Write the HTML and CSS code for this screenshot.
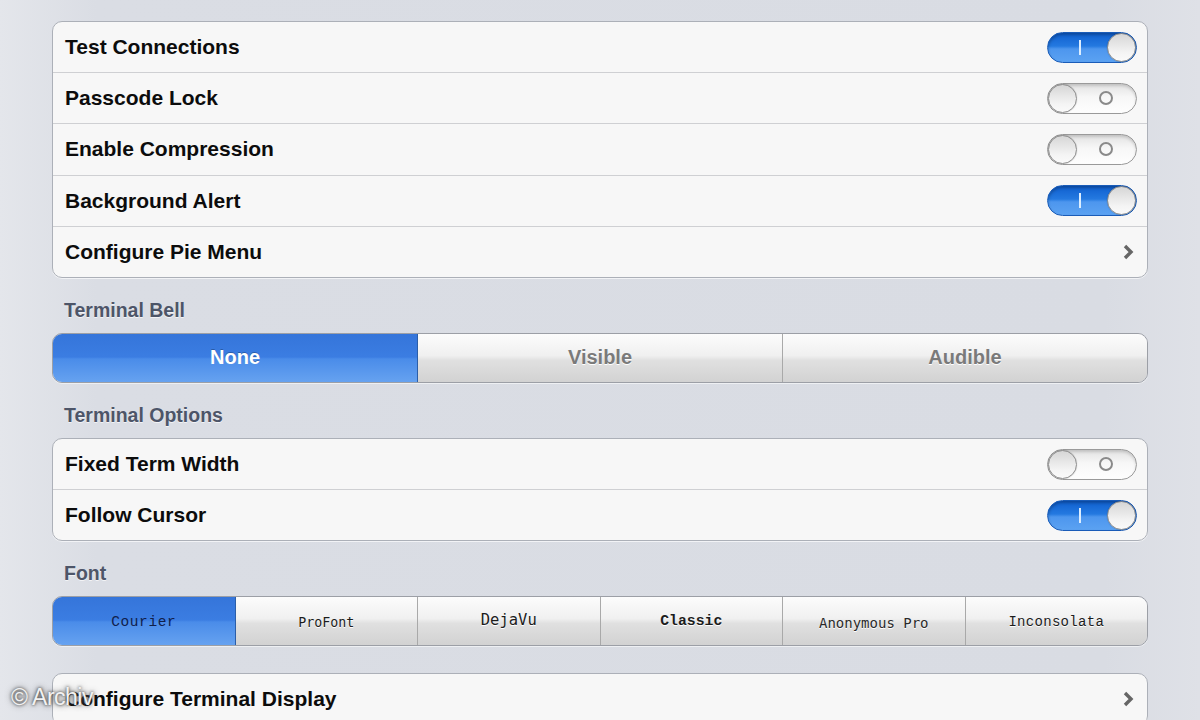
FILE: index.html
```html
<!DOCTYPE html>
<html lang="en">
<head>
  <meta charset="UTF-8" />
  <meta name="viewport" content="width=device-width, initial-scale=1.0">
  <title>Settings</title>
  <link rel="stylesheet" href="styles.css">
</head>
<body>
  <div class="page">
    <div class="group first">
      <div class="row">
        <span class="label">Test Connections</span>
        <span class="switch on"><span class="mark"></span><span class="knob"></span></span>
      </div>
      <div class="row">
        <span class="label">Passcode Lock</span>
        <span class="switch"><span class="knob"></span><span class="mark"></span></span>
      </div>
      <div class="row">
        <span class="label">Enable Compression</span>
        <span class="switch"><span class="knob"></span><span class="mark"></span></span>
      </div>
      <div class="row">
        <span class="label">Background Alert</span>
        <span class="switch on"><span class="mark"></span><span class="knob"></span></span>
      </div>
      <div class="row">
        <span class="label">Configure Pie Menu</span>
        <svg class="chevron" width="14" height="18" viewBox="0 0 14 18"><path d="M3 3 L9 9 L3 15" fill="none" stroke="#666" stroke-width="3.4"/></svg>
      </div>
    </div>

    <div class="section">Terminal Bell</div>
    <div class="segments">
      <div class="seg selected">None</div>
      <div class="seg">Visible</div>
      <div class="seg">Audible</div>
    </div>

    <div class="section">Terminal Options</div>
    <div class="group">
      <div class="row">
        <span class="label">Fixed Term Width</span>
        <span class="switch"><span class="knob"></span><span class="mark"></span></span>
      </div>
      <div class="row">
        <span class="label">Follow Cursor</span>
        <span class="switch on"><span class="mark"></span><span class="knob"></span></span>
      </div>
    </div>

    <div class="section">Font</div>
    <div class="segments fonts">
      <div class="seg selected f-courier">Courier</div>
      <div class="seg f-profont">ProFont</div>
      <div class="seg f-dejavu">DejaVu</div>
      <div class="seg f-classic">Classic</div>
      <div class="seg f-anon">Anonymous Pro</div>
      <div class="seg f-incon">Inconsolata</div>
    </div>

    <div class="group last">
      <div class="row">
        <span class="label">Configure Terminal Display</span>
        <svg class="chevron" width="14" height="18" viewBox="0 0 14 18"><path d="M3 3 L9 9 L3 15" fill="none" stroke="#666" stroke-width="3.4"/></svg>
      </div>
    </div>
  </div>

  <div class="watermark">© Archiv</div>
</body>
</html>
```

FILE: styles.css
```css
html, body {
  margin: 0;
  height: 100%;
  overflow: hidden;
}

body {
  background: linear-gradient(to right, #e4e6eb 0%, #dadde4 8%, #d9dce3 92%, #dfe1e7 100%);
  font-family: "Liberation Sans", Arial, sans-serif;
  color: #111;
}

.page {
  padding: 21px 52px 0 52px;
  width: 1096px;
}

.group {
  background: #f7f7f7;
  border: 1px solid #acb0b8;
  border-radius: 10px;
  box-shadow: 0 1px 0 #f2f3f6;
  overflow: hidden;
}

.group.last {
  margin-top: 27px;
}

.row {
  height: 50.2px;
  display: flex;
  align-items: center;
  justify-content: space-between;
  padding: 0 10px 0 12px;
  border-bottom: 1px solid #cfd0d3;
}

.row:last-child {
  border-bottom: none;
}

.label {
  font-size: 21px;
  font-weight: bold;
  color: #0c0c0c;
}

.chevron {
  margin-right: 1px;
}

.section {
  height: 55px;
  box-sizing: border-box;
  padding: 21px 0 0 12px;
  font-size: 19.5px;
  font-weight: bold;
  line-height: 22px;
  color: #4d5568;
  text-shadow: 0 1px 0 #f2f3f6;
}

/* switches */
.switch {
  width: 88px;
  height: 29px;
  border-radius: 16px;
  border: 1px solid #9a9a9a;
  display: flex;
  align-items: center;
  justify-content: space-between;
  background: linear-gradient(#e2e2e2, #f7f7f7 45%, #fefefe);
  box-shadow: inset 0 2px 3px rgba(0,0,0,0.15);
}

.switch.on {
  border-color: #1a5cb8;
  background: linear-gradient(#0f5fcf, #2479e0 45%, #4d96ee 55%, #5ba2f2);
  box-shadow: inset 0 2px 3px rgba(0,0,0,0.25);
}

.knob {
  width: 29px;
  height: 29px;
  border-radius: 50%;
  box-sizing: border-box;
  border: 1px solid #8c8c8c;
  background: linear-gradient(#d6d6d6, #f4f4f4 70%, #fafafa);
  box-shadow: 0 0 1px rgba(0,0,0,0.3);
}

.switch .mark {
  width: 14px;
  height: 14px;
  box-sizing: border-box;
  border: 2px solid #8a8a8a;
  border-radius: 50%;
  margin-right: 23px;
}

.switch.on .mark {
  width: 2px;
  height: 15px;
  border: none;
  border-radius: 0;
  background: #ddeeff;
  margin: 0 0 0 31px;
}

/* segmented controls */
.segments {
  display: flex;
  height: 50px;
  box-sizing: border-box;
  border: 1px solid #9c9fa6;
  border-radius: 10px;
  overflow: hidden;
  box-shadow: 0 1px 0 #eef0f3;
}

.seg {
  flex: 1;
  display: flex;
  align-items: center;
  justify-content: center;
  background: linear-gradient(#fcfcfc, #f0f0f0 45%, #e0e0e0 55%, #d2d2d2);
  border-left: 1px solid #a9a9a9;
  font-size: 20px;
  font-weight: bold;
  color: #7a7a7a;
  text-shadow: 0 1px 0 #ffffff;
}

.seg:first-child {
  border-left: none;
}

.seg.selected {
  background: linear-gradient(#3575da, #3b7de2 48%, #4a8ce9 52%, #66a2f0);
  color: #fff;
  text-shadow: 0 -1px 0 rgba(0,0,0,0.25);
  border-right: 1px solid #2b5ea8;
}

.seg.selected + .seg {
  border-left: none;
}

.fonts .seg {
  font-size: 13.5px;
  font-weight: normal;
  color: #1c1c1c;
  font-family: "DejaVu Sans Mono", monospace;
  letter-spacing: 0.2px;
}

.fonts .seg.selected {
  color: #10204a;
  text-shadow: none;
}

.fonts .f-courier {
  font-family: "Liberation Mono", monospace;
  font-size: 14.5px;
  letter-spacing: 0.6px;
  padding-top: 2px;
}

.fonts .f-profont {
  font-size: 13.3px;
  letter-spacing: 0;
  padding-top: 2px;
}

.fonts .f-dejavu {
  font-size: 15.5px;
  letter-spacing: 0;
  padding-bottom: 2px;
}

.fonts .f-classic {
  font-family: "Liberation Mono", monospace;
  font-weight: bold;
  font-size: 14.8px;
  letter-spacing: 0;
}

.fonts .f-anon {
  font-size: 14px;
  letter-spacing: 0;
  color: #2a2a2a;
  padding-top: 4px;
}

.fonts .f-incon {
  font-family: "Liberation Mono", monospace;
  font-size: 14px;
  letter-spacing: 0.3px;
  padding-top: 2px;
}

.watermark {
  position: absolute;
  left: 11px;
  top: 684px;
  font-size: 23px;
  color: #f2f2f2;
  text-shadow: 0 0 3px #333, 0 0 6px #555;
  letter-spacing: -0.5px;
}
```
